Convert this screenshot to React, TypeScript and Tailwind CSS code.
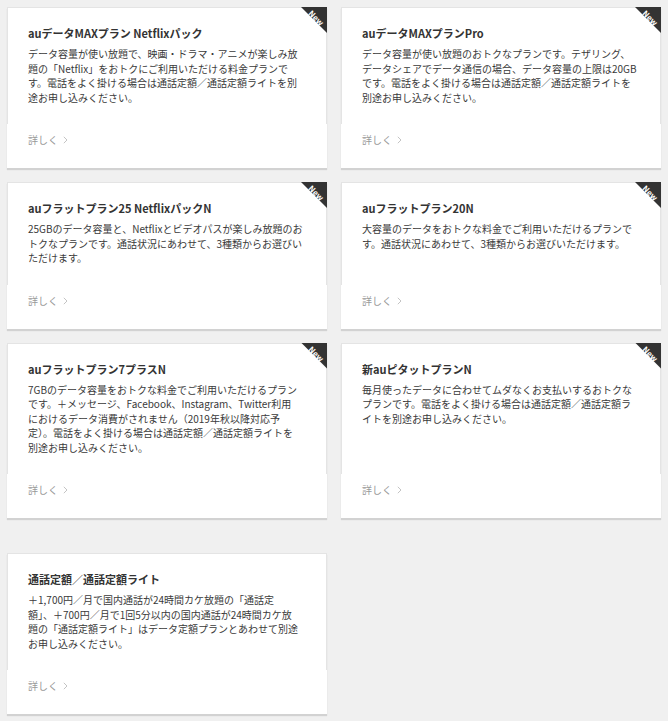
import React from "react";

type Plan = { title: string; lines: string[]; isNew: boolean };

const plans: Plan[] = [
  {
    title: "auデータMAXプラン Netflixパック",
    lines: [
      "データ容量が使い放題で、映画・ドラマ・アニメが楽しみ放",
      "題の「Netflix」をおトクにご利用いただける料金プランで",
      "す。電話をよく掛ける場合は通話定額／通話定額ライトを別",
      "途お申し込みください。",
    ],
    isNew: true,
  },
  {
    title: "auデータMAXプランPro",
    lines: [
      "データ容量が使い放題のおトクなプランです。テザリング、",
      "データシェアでデータ通信の場合、データ容量の上限は20GB",
      "です。電話をよく掛ける場合は通話定額／通話定額ライトを",
      "別途お申し込みください。",
    ],
    isNew: true,
  },
  {
    title: "auフラットプラン25 NetflixパックN",
    lines: [
      "25GBのデータ容量と、Netflixとビデオパスが楽しみ放題のお",
      "トクなプランです。通話状況にあわせて、3種類からお選びい",
      "ただけます。",
    ],
    isNew: true,
  },
  {
    title: "auフラットプラン20N",
    lines: [
      "大容量のデータをおトクな料金でご利用いただけるプランで",
      "す。通話状況にあわせて、3種類からお選びいただけます。",
    ],
    isNew: true,
  },
  {
    title: "auフラットプラン7プラスN",
    lines: [
      "7GBのデータ容量をおトクな料金でご利用いただけるプラン",
      "です。＋メッセージ、Facebook、Instagram、Twitter利用",
      "におけるデータ消費がされません（2019年秋以降対応予",
      "定）。電話をよく掛ける場合は通話定額／通話定額ライトを",
      "別途お申し込みください。",
    ],
    isNew: true,
  },
  {
    title: "新auピタットプランN",
    lines: [
      "毎月使ったデータに合わせてムダなくお支払いするおトクな",
      "プランです。電話をよく掛ける場合は通話定額／通話定額ラ",
      "イトを別途お申し込みください。",
    ],
    isNew: true,
  },
];

const extra: Plan = {
  title: "通話定額／通話定額ライト",
  lines: [
    "＋1,700円／月で国内通話が24時間カケ放題の「通話定",
    "額」、＋700円／月で1回5分以内の国内通話が24時間カケ放",
    "題の「通話定額ライト」はデータ定額プランとあわせて別途",
    "お申し込みください。",
  ],
  isNew: false,
};

function NewBadge() {
  return (
    <div className="absolute top-0 right-0 w-[26px] h-[26px] overflow-hidden">
      <div className="absolute inset-0 bg-[#333333] [clip-path:polygon(0_0,100%_0,100%_100%)]" />
      <div className="absolute left-[3px] top-[6px] w-[24px] h-[10px] rotate-45 text-center text-[8px] leading-[10px] font-bold text-white">
        New
      </div>
    </div>
  );
}

function Card({ plan }: { plan: Plan }) {
  return (
    <div className="relative flex flex-col bg-white shadow-[0_2px_1px_rgba(0,0,0,0.12)]">
      <div className="flex-1 border-t border-x border-[#e4e4e4] pt-[17px] pb-[19px] px-[20px]">
        <h3 className="text-[11px] leading-[16px] font-bold text-[#333333]">{plan.title}</h3>
        <p className="mt-[6px] text-[10px] leading-[14.5px] text-[#3a3a3a]">
          {plan.lines.map((l, i) => (
            <span key={i} className="block whitespace-nowrap">
              {l}
            </span>
          ))}
        </p>
      </div>
      <div className="h-[44px] px-[21px] pt-[9px]">
        <a className="flex items-center gap-[5px] text-[10px] leading-[14px] text-[#999999]">
          <span>詳しく</span>
          <svg width="5" height="8" viewBox="0 0 5 8" fill="none">
            <path d="M0.8 0.8L4 4L0.8 7.2" stroke="#c4c4c4" strokeWidth="1" />
          </svg>
        </a>
      </div>
      {plan.isNew && <NewBadge />}
    </div>
  );
}

export default function App() {
  return (
    <div
      className="min-h-screen bg-[#f0f0f0] px-[7px] pt-[7px] pb-[8px]"
      style={{ fontFamily: '"Noto Sans CJK JP", "Noto Sans", sans-serif' }}
    >
      <div className="grid grid-cols-2 gap-[14px]">
        {plans.map((p, i) => (
          <Card key={i} plan={p} />
        ))}
      </div>
      <div className="grid grid-cols-2 gap-[14px] mt-[35px]">
        <Card plan={extra} />
      </div>
    </div>
  );
}
